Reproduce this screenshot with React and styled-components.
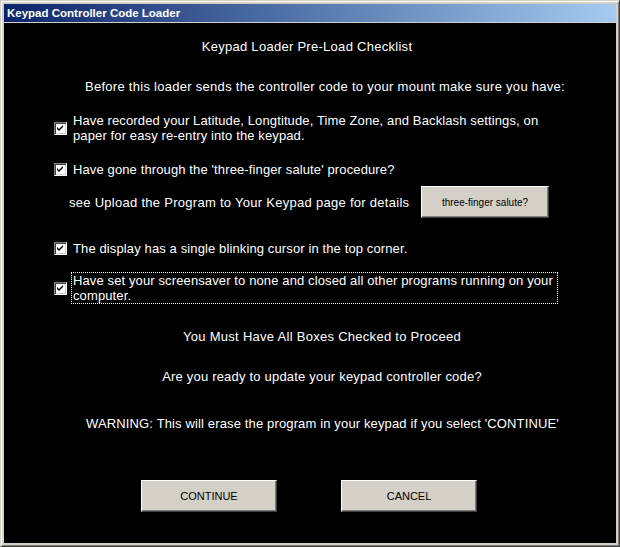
import React, { useState } from 'react'
import styled, { createGlobalStyle } from 'styled-components'

const GlobalStyle = createGlobalStyle`
html, body {
    margin: 0;
    padding: 0;
    background: #ffffff;
}
* { box-sizing: border-box; }
`

const Window = styled.div`
width: 620px;
height: 547px;
background: #d4d0c8;
border: 1px solid;
border-color: #d4d0c8 #404040 #404040 #d4d0c8;
box-shadow: inset 1px 1px 0 #ffffff, inset -1px -1px 0 #808080;
padding: 3px;
display: flex;
flex-direction: column;
`

const TitleBar = styled.div`
height: 18px;
background: linear-gradient(to right, #0a246a, #a6caf0);
color: #ffffff;
font-family: "Liberation Sans", Arial, sans-serif;
font-weight: bold;
font-size: 11.5px;
line-height: 18px;
padding-left: 3px;
margin-bottom: 1px;
white-space: nowrap;
`

const Client = styled.div`
flex: 1;
background: #000000;
color: #ffffff;
font-family: "Liberation Sans", Arial, sans-serif;
font-size: 13px;
letter-spacing: 0.28px;
line-height: 15px;
padding-top: 16px;
display: flex;
flex-direction: column;
`

const Centered = styled.div`
text-align: center;
margin-top: ${(p) => p.$gap || 0}px;
padding-left: ${(p) => Math.max(p.$shift || 0, 0)}px;
padding-right: ${(p) => Math.max(-(p.$shift || 0), 0)}px;
letter-spacing: ${(p) => p.$spacing ?? 0.28}px;
white-space: nowrap;
`

const CheckRow = styled.label`
display: flex;
align-items: center;
margin-top: ${(p) => p.$gap || 0}px;
padding-left: 50px;
cursor: default;
`

const Box = styled.span`
flex: none;
width: 13px;
height: 13px;
background: #ffffff;
border: 1px solid;
border-color: #808080 #ffffff #ffffff #808080;
box-shadow: inset 1px 1px 0 #404040, inset -1px -1px 0 #d4d0c8;
display: flex;
align-items: center;
justify-content: center;
margin-right: 4px;
`

const CheckText = styled.span`
width: ${(p) => p.$width || 'auto'};
padding: 0 1px;
letter-spacing: 0.12px;
white-space: nowrap;
border: 1px dotted ${(p) => (p.$focus ? '#ffffff' : 'transparent')};
`

const SeeRow = styled.div`
display: flex;
align-items: center;
margin-top: 8px;
padding-left: 65px;
`

const SeeText = styled.span`
width: 352px;
`

const Button = styled.button`
width: ${(p) => p.$width}px;
height: 32px;
background: #d4d0c8;
color: #000000;
font-family: "Liberation Sans", Arial, sans-serif;
font-size: ${(p) => p.$size || 11}px;
letter-spacing: 0;
border: 1px solid;
border-color: #ffffff #404040 #404040 #ffffff;
box-shadow: inset -1px -1px 0 #808080;
padding: 0;
`

const ButtonRow = styled.div`
display: flex;
gap: 64px;
padding-left: 137px;
margin-top: 49px;
`

const Tick = () => (
    <svg width="7" height="7" viewBox="0 0 7 7">
        <path d="M0 2 L2 4 L6 0 L6 2 L2 6 L0 4 Z" fill="#000000" />
    </svg>
)

const items = [
    { lines: ['Have recorded your Latitude, Longtitude, Time Zone, and Backlash settings, on', 'paper for easy re-entry into the keypad.'], gap: 18 },
    { lines: ["Have gone through the 'three-finger salute' procedure?"], gap: 17 },
]

const Lines = ({ lines }) =>
    lines.map((l, i) => (
        <React.Fragment key={i}>
            {i > 0 && <br />}
            {l}
        </React.Fragment>
    ))

const App = () => {
    const [checked] = useState([true, true, true, true])
    return (
        <>
            <GlobalStyle />
            <Window>
                <TitleBar>Keypad Controller Code Loader</TitleBar>
                <Client>
                    <Centered $shift={-6}>Keypad Loader Pre-Load Checklist</Centered>
                    <Centered $gap={25} $shift={30}>Before this loader sends the controller code to your mount make sure you have:</Centered>
                    {items.map((it, i) => (
                        <CheckRow key={i} $gap={it.gap}>
                            <Box>{checked[i] && <Tick />}</Box>
                            <CheckText><Lines lines={it.lines} /></CheckText>
                        </CheckRow>
                    ))}
                    <SeeRow>
                        <SeeText>see Upload the Program to Your Keypad page for details</SeeText>
                        <Button $width={128} $size={10}>three-finger salute?</Button>
                    </SeeRow>
                    <CheckRow $gap={22}>
                        <Box>{checked[2] && <Tick />}</Box>
                        <CheckText>The display has a single blinking cursor in the top corner.</CheckText>
                    </CheckRow>
                    <CheckRow $gap={15}>
                        <Box>{checked[3] && <Tick />}</Box>
                        <CheckText $focus $width="487px">
                            <Lines lines={['Have set your screensaver to none and closed all other programs running on your', 'computer.']} />
                        </CheckText>
                    </CheckRow>
                    <Centered $gap={25} $shift={24}>You Must Have All Boxes Checked to Proceed</Centered>
                    <Centered $gap={25} $shift={24} $spacing={0.2}>Are you ready to update your keypad controller code?</Centered>
                    <Centered $gap={32} $shift={25} $spacing={0.14}>WARNING: This will erase the program in your keypad if you select 'CONTINUE'</Centered>
                    <ButtonRow>
                        <Button $width={136}>CONTINUE</Button>
                        <Button $width={136}>CANCEL</Button>
                    </ButtonRow>
                </Client>
            </Window>
        </>
    )
}

export default App
